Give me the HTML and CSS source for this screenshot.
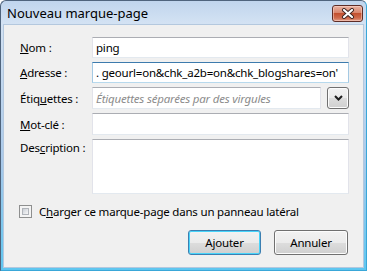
FILE: index.html
```html
<!DOCTYPE html>
<html lang="fr">
<head>
  <meta charset="UTF-8">
  <title>Nouveau marque-page</title>
  <link rel="stylesheet" href="styles.css">
</head>
<body>
  <div class="window">
    <div class="titlebar">
      <span class="title">Nouveau marque-page</span>
      <span class="close-btn">
        <svg width="14" height="11" viewBox="0 0 14 11">
          <path d="M3 2 L11 9 M11 2 L3 9" stroke="#3b2320" stroke-width="4" stroke-linecap="round"/>
          <path d="M3 2 L11 9 M11 2 L3 9" stroke="#ffffff" stroke-width="2.2" stroke-linecap="round"/>
        </svg>
      </span>
    </div>

    <div class="client">
      <div class="form">
        <div class="row">
          <label class="field-label"><u>N</u>om :</label>
          <div class="textbox">ping</div>
        </div>
        <div class="row">
          <label class="field-label"><u>A</u>dresse :</label>
          <div class="textbox focused scrolled">. geourl=on&amp;chk_a2b=on&amp;chk_blogshares=on'</div>
        </div>
        <div class="row row-tall">
          <label class="field-label">Étiq<u>u</u>ettes :</label>
          <div class="textbox placeholder">Étiquettes séparées par des virgules</div>
          <span class="drop-btn">
            <svg width="9" height="6" viewBox="0 0 9 6">
              <path d="M1 1 L4.5 4.5 L8 1" stroke="#1e1e1e" stroke-width="2" fill="none"/>
            </svg>
          </span>
        </div>
        <div class="row row-tall">
          <label class="field-label"><u>M</u>ot-clé :</label>
          <div class="textbox"></div>
        </div>
        <div class="row row-desc">
          <label class="field-label">Des<u>c</u>ription :</label>
          <div class="textbox textarea"></div>
        </div>
      </div>

      <div class="check-row">
        <span class="checkbox"><span class="checkbox-inner"></span></span>
        <span>C<u>h</u>arger ce marque-page dans un panneau latéral</span>
      </div>

      <div class="actions">
        <span class="btn default">Ajouter</span>
        <span class="btn">Annuler</span>
      </div>
    </div>
  </div>
</body>
</html>
```

FILE: styles.css
```css
* {
  margin: 0;
  padding: 0;
  box-sizing: border-box;
}

body {
  width: 367px;
  height: 271px;
  font-family: "Noto Sans", "Open Sans", sans-serif;
  font-size: 11.5px;
  letter-spacing: -0.2px;
  color: #000;
  background: #fff;
  overflow: hidden;
}

.window {
  width: 367px;
  height: 271px;
  border: 1px solid #4f647d;
  border-bottom-color: #3aa7d8;
  border-right-color: #3aa7d8;
  border-radius: 6px 6px 0 0;
  padding: 0 2px 2px 2px;
  display: flex;
  flex-direction: column;
  background: linear-gradient(to bottom, #c0d5ed 0, #d3e2f3 22px, #a9c9ea 60%, #5ec6f0 100%);
}

.titlebar {
  height: 23px;
  display: flex;
  align-items: flex-start;
  justify-content: space-between;
}

.title {
  margin-left: 4px;
  margin-top: 3px;
  font-size: 13px;
  letter-spacing: 0;
  color: #000;
}

.close-btn {
  width: 31px;
  height: 17px;
  margin-top: 4px;
  margin-right: 1px;
  border: 1px solid #5e2d27;
  border-radius: 3px;
  display: flex;
  align-items: center;
  justify-content: center;
  background: linear-gradient(to bottom, #e9b3a3 0%, #d9866d 45%, #c3502f 50%, #cf6b4d 80%, #e2a08a 100%);
  box-shadow: inset 0 0 0 1px rgba(255, 220, 210, 0.5);
}

.client {
  flex: 1;
  background: #f0f0f0;
  border: 1px solid #b4c8de;
  padding: 12px 14px 12px 16px;
  display: flex;
  flex-direction: column;
}

.form {
  display: flex;
  flex-direction: column;
  gap: 4px;
}

.row {
  display: flex;
  align-items: center;
  height: 21px;
}

.row-tall {
  height: 22px;
}

.row-desc {
  height: 55px;
  align-items: flex-start;
}

.row-desc .field-label {
  padding-top: 1px;
}

.field-label {
  width: 72px;
  flex-shrink: 0;
}

.textbox {
  flex: 1;
  min-width: 0;
  height: 100%;
  background: #fff;
  border: 1px solid #e2e3ea;
  border-top-color: #abadb3;
  border-bottom-color: #e3e9ef;
  padding: 0 3px;
  display: flex;
  align-items: center;
  white-space: nowrap;
  overflow: hidden;
}

.textbox.focused {
  border-color: #a4c9e3;
  border-top-color: #3d7bad;
  border-bottom-color: #b7d9ed;
}

.textbox.scrolled {
  justify-content: space-between;
  padding-right: 2px;
}

.textbox.placeholder {
  color: #8c8c8c;
  font-style: italic;
}

.textbox.textarea {
  align-items: flex-start;
}

.drop-btn {
  width: 22px;
  height: 22px;
  margin-left: 6px;
  flex-shrink: 0;
  border: 1px solid #707070;
  border-radius: 3px;
  display: flex;
  align-items: center;
  justify-content: center;
  background: linear-gradient(to bottom, #f2f2f2 0%, #ebebeb 50%, #dddddd 51%, #cfcfcf 100%);
  box-shadow: inset 0 0 0 1px #fcfcfc;
}

.check-row {
  display: flex;
  align-items: center;
  gap: 7px;
  margin-top: 10px;
  margin-left: -1px;
}

.checkbox {
  width: 13px;
  height: 13px;
  border: 1px solid #8e8f8f;
  background: #f4f4f4;
  padding: 2px;
  display: flex;
}

.checkbox-inner {
  flex: 1;
  background: linear-gradient(135deg, #cbcfd5 0%, #e6e8eb 60%, #f6f6f6 100%);
  border: 1px solid #b0b4ba;
}

.actions {
  margin-top: auto;
  display: flex;
  justify-content: flex-end;
  gap: 13px;
  padding-right: 1px;
}

.btn {
  width: 74px;
  height: 25px;
  border: 1px solid #707070;
  border-radius: 3px;
  display: flex;
  align-items: center;
  justify-content: center;
  background: linear-gradient(to bottom, #f2f2f2 0%, #ebebeb 50%, #dddddd 51%, #cfcfcf 100%);
  box-shadow: inset 0 0 0 1px #fcfcfc;
}

.btn.default {
  width: 73px;
  border-color: #3c7fb1;
  box-shadow: inset 0 0 0 1px #48d4fa;
}
```
